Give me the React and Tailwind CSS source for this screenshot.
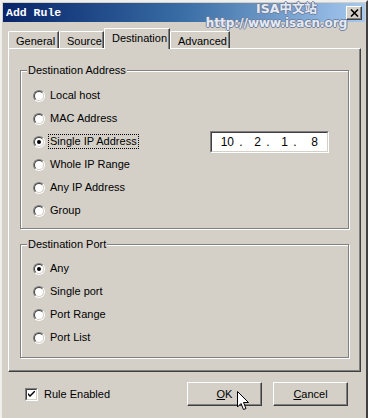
import React from "react";

const Radio = ({ checked }) => (
  <span className="w-[12px] h-[12px] rounded-full border border-t-[#808080] border-l-[#808080] border-b-white border-r-white flex shrink-0">
    <span className="flex-1 rounded-full border border-t-[#404040] border-l-[#404040] border-b-[#d4d0c8] border-r-[#d4d0c8] bg-white flex items-center justify-center">
      {checked && <span className="w-[4px] h-[4px] rounded-full bg-black" />}
    </span>
  </span>
);

const RadioRow = ({ label, checked, focus, children }) => (
  <div className="h-[23px] flex items-center pl-[12px]">
    <Radio checked={checked} />
    <span
      className={
        "ml-[4px] px-[1px] leading-[13px] " +
        (focus ? "outline outline-1 outline-dotted outline-black" : "")
      }
    >
      {label}
    </span>
    {children}
  </div>
);

const GroupBox = ({ title, className, children }) => (
  <div
    className={
      "relative border border-[#808080] shadow-[inset_1px_1px_0_#fff,1px_1px_0_#fff] " +
      className
    }
  >
    <span className="absolute -top-[7px] left-[6px] px-[1px] bg-[#d4d0c8] leading-[13px]">
      {title}
    </span>
    {children}
  </div>
);

const Tab = ({ label, active }) =>
  active ? (
    <div className="h-[21px] -mb-[1px] -mx-[2px] px-[7px] pt-[2px] bg-[#d4d0c8] border-t border-l border-white border-r border-r-[#404040] shadow-[inset_-1px_0_0_#808080] relative z-10 leading-[14px]">
      {label}
    </div>
  ) : (
    <div className="h-[17px] px-[7px] pt-[2px] border-t border-l border-white border-r border-r-[#404040] shadow-[inset_-1px_0_0_#808080] leading-[14px] rounded-tl-[2px]">
      {label}
    </div>
  );

const Button = ({ children }) => (
  <div className="w-[75px] h-[24px] border border-t-white border-l-white border-b-[#404040] border-r-[#404040] shadow-[inset_-1px_-1px_0_#808080] flex items-center justify-center">
    {children}
  </div>
);

export default function App() {
  return (
    <div className="w-[368px] h-[418px] bg-[#d4d0c8] overflow-hidden font-['Liberation_Sans',Arial,sans-serif] text-[11px] text-black relative">
      <div className="h-full border-t-2 border-l-2 border-t-[#f0efeb] border-l-[#f0efeb] border-r-2 border-r-[#404040] flex flex-col">
        {/* title bar */}
        <div className="mt-[1px] ml-[1px] mr-[1px] h-[19px] bg-gradient-to-r from-[#0a246a] via-[#3a6ea5] to-[#a6caf0] flex items-center pl-[3px] pr-[3px]">
          <span className="font-['Liberation_Mono',monospace] font-bold text-[11.5px] text-white">
            Add Rule
          </span>
          <div className="ml-auto w-[16px] h-[14px] bg-[#d4d0c8] border border-t-white border-l-white border-b-[#404040] border-r-[#404040] shadow-[inset_-1px_-1px_0_#808080] flex items-center justify-center">
            <svg width="9" height="8" viewBox="0 0 9 8">
              <path d="M1 0.5 L8 7.5 M8 0.5 L1 7.5" stroke="#000" strokeWidth="1.6" />
            </svg>
          </div>
        </div>

        {/* tabs */}
        <div className="mt-[9px] ml-[6px] flex items-end h-[17px]">
          <div className="w-[51px]"><Tab label="General" /></div>
          <div className="w-[45px]"><Tab label="Source" /></div>
          <div className="w-[66px] px-[2px]"><Tab label="Destination" active /></div>
          <div className="w-[60px]"><Tab label="Advanced" /></div>
        </div>

        {/* page */}
        <div className="ml-[6px] w-[353px] h-[324px] border-t border-l border-white border-r border-b border-r-[#404040] border-b-[#404040] shadow-[inset_-1px_-1px_0_#808080] pt-[21px] pl-[11px]">
          <GroupBox title="Destination Address" className="w-[329px] h-[159px] pt-[13px]">
            <RadioRow label="Local host" />
            <RadioRow label="MAC Address" />
            <RadioRow label="Single IP Address" checked focus>
              <div className="ml-auto mr-[19px] w-[119px] h-[22px] border border-t-[#808080] border-l-[#808080] border-b-white border-r-white">
                <div className="h-full border border-t-[#404040] border-l-[#404040] border-b-[#d4d0c8] border-r-[#d4d0c8] bg-white flex items-center text-[12px] text-black">
                  <span className="w-[22px] text-right">10</span>
                  <span className="w-[14px] text-center">.</span>
                  <span className="w-[13px] text-right">2</span>
                  <span className="w-[14px] text-center">.</span>
                  <span className="w-[13px] text-right">1</span>
                  <span className="w-[14px] text-center">.</span>
                  <span className="w-[16px] text-right">8</span>
                </div>
              </div>
            </RadioRow>
            <RadioRow label="Whole IP Range" />
            <RadioRow label="Any IP Address" />
            <RadioRow label="Group" />
          </GroupBox>

          <GroupBox title="Destination Port" className="mt-[15px] w-[329px] h-[114px] pt-[12px]">
            <RadioRow label="Any" checked />
            <RadioRow label="Single port" />
            <RadioRow label="Port Range" />
            <RadioRow label="Port List" />
          </GroupBox>
        </div>

        {/* footer */}
        <div className="flex items-center mt-[10px] h-[24px]">
          <div className="ml-[23px] w-[13px] h-[13px] border border-t-[#808080] border-l-[#808080] border-b-white border-r-white">
            <div className="h-full border border-t-[#404040] border-l-[#404040] border-b-[#d4d0c8] border-r-[#d4d0c8] bg-white flex items-center justify-center">
              <svg width="7" height="7" viewBox="0 0 7 7">
                <path d="M0 2 L0 4 L2 6 L7 1 L7 -1 L2 4 Z" fill="#000" />
              </svg>
            </div>
          </div>
          <span className="ml-[6px]">Rule Enabled</span>
          <div className="ml-auto flex gap-[11px] mr-[18px]">
            <Button>
              <span><span className="underline">O</span>K</span>
            </Button>
            <Button>
              <span><span className="underline">C</span>ancel</span>
            </Button>
          </div>
        </div>
      </div>

      {/* watermark */}
      <div className="absolute left-[211px] top-[2px] w-[131px] flex flex-col items-center font-['DejaVu_Sans','Noto_Sans_CJK_SC',sans-serif] font-bold text-[#e4eaf4] [text-shadow:1px_0_0_#72809e,-1px_0_0_#72809e,0_1px_0_#72809e,0_-1px_0_#72809e] pointer-events-none">
        <span className="text-[12.5px] leading-[14px] ml-[20px]">ISA中文站</span>
        <span className="text-[12px] leading-[14px]">http://www.isacn.org</span>
      </div>

      {/* mouse cursor */}
      <svg className="absolute left-[237px] top-[391px]" width="13" height="21" viewBox="0 0 13 21">
        <path d="M0.5 0.5 L0.5 16 L4 12.5 L6.5 18.5 L9 17.5 L6.5 11.5 L11.5 11.5 Z" fill="#fff" stroke="#000" strokeWidth="1" />
      </svg>
    </div>
  );
}
